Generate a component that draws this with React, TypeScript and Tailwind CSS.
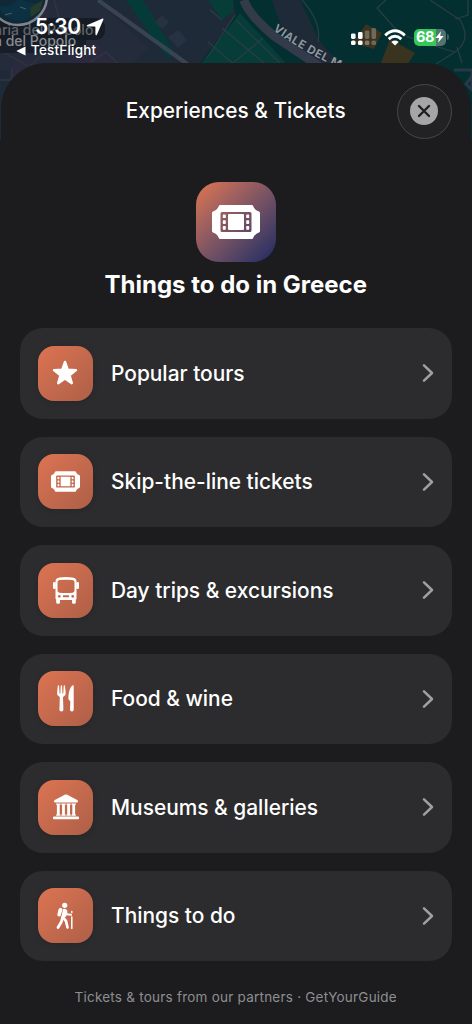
import type { ReactNode } from "react";

type Item = {
  label: string;
  icon: ReactNode;
};

function TicketIcon({ className }: { className?: string }) {
  return (
    <svg viewBox="0 0 48 34" className={className} fill="currentColor">
      <path
        fillRule="evenodd"
        d="M8.200 0H39.800Q40.800 0 41.200 1C42 3.500 44 5.400 46.600 6.300Q48 6.800 48 8V26Q48 27.200 46.600 27.700C44 28.600 42 30.500 41.200 33Q40.800 34 39.800 34H8.200Q7.200 34 6.800 33C6 30.500 4 28.600 1.400 27.700Q0 27.200 0 26V8Q0 6.800 1.400 6.300C4 5.400 6 3.500 6.800 1Q7.200 0 8.200 0ZM10 7Q8.500 7 8.500 8.500V25.500Q8.500 27 10 27H38Q39.500 27 39.500 25.500V8.500Q39.500 7 38 7Z"
      />
      <rect x="16" y="9" width="16" height="16" rx="1" />
      <rect x="10.800" y="9.400" width="3" height="3.700" rx=".7" />
      <rect x="10.800" y="15.200" width="3" height="3.700" rx=".7" />
      <rect x="10.800" y="21" width="3" height="3.700" rx=".7" />
      <rect x="34.200" y="9.400" width="3" height="3.700" rx=".7" />
      <rect x="34.200" y="15.200" width="3" height="3.700" rx=".7" />
      <rect x="34.200" y="21" width="3" height="3.700" rx=".7" />
    </svg>
  );
}

function StarIcon() {
  return (
    <svg viewBox="0 0 26 26" className="mr-px size-[26px]" fill="currentColor">
      <path
        d="M13 2L15.800 9.800L24 10.100L17.500 15.200L19.800 23.200L13 18.600L6.200 23.200L8.500 15.200L2 10.100L10.200 9.800Z"
        stroke="currentColor"
        strokeWidth="2.400"
        strokeLinejoin="round"
      />
    </svg>
  );
}

function BusIcon() {
  return (
    <svg viewBox="0 0 26 27" className="w-[26px] h-[27px]" fill="currentColor">
      <path
        fillRule="evenodd"
        d="M6.500 .6Q13 -.5 19.500 .6Q23.500 1.200 23.500 4.500V21.500Q23.500 22.300 22.800 22.600V25.500Q22.800 26.800 21.500 26.800H20.200Q19 26.800 19 25.500V23H7V25.500Q7 26.800 5.800 26.800H4.500Q3.200 26.800 3.200 25.500V22.600Q2.500 22.300 2.500 21.500V4.500Q2.500 1.200 6.500 .6ZM6.500 3Q4.500 3.300 4.500 5V13.500Q4.500 15.500 6.500 15.700Q13 16.400 19.500 15.700Q21.500 15.500 21.500 13.500V5Q21.500 3.300 19.500 3Q13 2.300 6.500 3ZM6.300 17.900A1.400 1.400 0 1 0 6.300 20.700A1.400 1.400 0 1 0 6.300 17.900ZM19.700 17.900A1.400 1.400 0 1 0 19.700 20.700A1.400 1.400 0 1 0 19.700 17.900ZM10.500 18.300Q9.800 18.300 9.800 19.300Q9.800 20.300 10.500 20.300H15.500Q16.200 20.300 16.200 19.300Q16.200 18.300 15.500 18.300Z"
      />
      <rect x="0" y="5" width="2.800" height="7" rx="1.200" />
      <rect x="23.200" y="5" width="2.800" height="7" rx="1.200" />
    </svg>
  );
}

function ForkKnifeIcon() {
  return (
    <svg viewBox="0 0 18 27" className="w-[18px] h-[27px]" fill="currentColor">
      <path d="M.8 1Q.9 .3 1.500 .3Q2.100 .3 2.100 1L2.500 8Q2.600 8.500 3 8.500Q3.400 8.500 3.400 8L3.700 1Q3.800 .3 4.400 .3Q5 .3 5.100 1L5.400 8Q5.400 8.500 5.800 8.500Q6.200 8.500 6.300 8L6.700 1Q6.700 .3 7.300 .3Q7.900 .3 8 1L8.700 8Q8.900 10.500 6.600 11.500Q6 11.900 6 12.700L6.400 24.800Q6.400 26.500 4.400 26.500Q2.400 26.500 2.400 24.800L2.800 12.700Q2.800 11.900 2.200 11.500Q-.1 10.500 .1 8Z" />
      <path d="M15.300 .5Q16.700 -.3 16.700 1.300V24.800Q16.700 26.500 14.900 26.500Q13 26.500 13 24.800L13.300 16.600Q13.300 16 12.800 15.700Q11.300 14.900 11.400 13C11.500 7.500 12.800 2.500 15.300 .5Z" />
    </svg>
  );
}

function MuseumIcon() {
  return (
    <svg viewBox="0 0 26 26" className="size-[26px]" fill="currentColor">
      <path d="M12.200 .6Q13 .2 13.800 .6L24.200 6Q25 6.500 25 7.500Q25 8.600 23.800 8.600H2.200Q1 8.600 1 7.500Q1 6.500 1.800 6Z" />
      <path d="M3.100 9.600H7.500V10.800H6.700V20.500H7.500V21.800H3.100V20.500H3.900V10.800H3.100ZM8.300 9.600H12.700V10.800H11.900V20.500H12.700V21.800H8.300V20.500H9.100V10.800H8.300ZM13.400 9.600H17.800V10.800H17V20.500H17.800V21.800H13.400V20.500H14.200V10.800H13.400ZM18.500 9.600H22.900V10.800H22.100V20.500H22.900V21.800H18.500V20.500H19.300V10.800H18.500Z" />
      <rect x="0" y="22.600" width="26" height="2.700" rx="1" />
    </svg>
  );
}

function HikerIcon() {
  return (
    <svg
      viewBox="0 0 18 28"
      className="mr-[2px] w-[18px] h-7"
      fill="none"
      stroke="currentColor"
      strokeLinecap="round"
      strokeLinejoin="round"
    >
      <circle cx="8.700" cy="3.300" r="2.600" fill="currentColor" stroke="none" />
      <path
        d="M4.300 5.900Q5 5.600 5.600 6.200L6.600 7.200L4.600 13.800Q4.300 14.700 3.400 14.400L1.900 13.900Q1.100 13.600 1.300 12.700L2.400 7.700Q2.800 6.200 4.300 5.900Z"
        fill="currentColor"
        stroke="none"
      />
      <path
        d="M8.200 8L6.600 15L9.300 13.300L10 9Z"
        fill="currentColor"
        strokeWidth="2.600"
      />
      <path d="M9.500 8.800L11 12.300L15 12.800" strokeWidth="2" />
      <path d="M6.500 15.500L5.300 20L2 25.500" strokeWidth="2.800" />
      <path d="M7 15.500L10 19L11.500 25.500" strokeWidth="2.700" />
      <path d="M15.800 9.600V10.400M15.800 15V26.500" strokeWidth="1.500" />
    </svg>
  );
}

const items: Item[] = [
  { label: "Popular tours", icon: <StarIcon /> },
  {
    label: "Skip-the-line tickets",
    icon: <TicketIcon className="w-[29px] h-[21px]" />,
  },
  { label: "Day trips & excursions", icon: <BusIcon /> },
  { label: "Food & wine", icon: <ForkKnifeIcon /> },
  { label: "Museums & galleries", icon: <MuseumIcon /> },
  { label: "Things to do", icon: <HikerIcon /> },
];

function MapBackground() {
  return (
    <svg
      viewBox="0 0 472 140"
      className="absolute left-0 top-0 w-[472px] h-[140px]"
      fill="none"
    >
      <rect width="472" height="140" fill="#1f2a39" />
      <path d="M34 0H95L150 48L125 70H0V40Z" fill="#242b3b" />
      <path d="M38 0H48L50 20L40 22ZM66 50L96 42L125 66H70ZM15 60H40L10 90V70Z" fill="#2a293e" />
      <path d="M126 0H143L175 54L167 58Z" fill="#043b38" />
      <path d="M233 0H472V140H410L330 70H195L236 15Z" fill="#032f30" />
      <path d="M208 0H233V12L222 20ZM240 13L285 62L275 70H196Z" fill="#063d38" />
      <path d="M272 0H300Q308 17 316 34T350 70H325Q285 48 272 0Z" fill="#1f2a39" />
      <path d="M155 22L162 15L169 22L162 29ZM168 37L178 30L187 40L178 48Z" fill="#263141" />
      <g stroke="#2b3341" strokeWidth="2">
        <path d="M98 0L190 66" stroke="#3a4352" strokeWidth="4" />
        <path d="M54 0L64 35L30 66M0 80H20M12 68V130M90 62L106 52L118 64" />
        <path d="M0 50L28 66M66 34L55 20L40 28M63 30L82 56" />
      </g>
      <g stroke="#2a3c46" strokeWidth="1.300">
        <path d="M210 10L222 20M235 15L207 58M208 42L236 66M222 28L264 63M236 20L280 63M263 38L233 63M302 0Q322 22 318 42M386 0L377 8L400 34L438 47L455 52Q472 40 460 20L430 0M455 52L436 64M462 63L457 47M468 0V15L455 19" />
      </g>
      <path d="M244 0Q248 14 274 36L322 68" stroke="#333a49" strokeWidth="9" />
      <path d="M366 24L382 33L374 49L353 43Z" fill="#3b321f" />
      <path d="M390 39L415 53L405 68H379Z" fill="#3a3320" />
      <path d="M454 70H472V90L466 84L472 76" stroke="#29374a" strokeWidth="3" />
      <path id="road-label" d="M273 30Q298 49 340 69" />
      <text
        fill="#8d959e"
        stroke="#19232f"
        strokeWidth="1"
        paintOrder="stroke"
        className="font-['Inter'] text-[11.500px] font-bold tracking-[0.500px]"
      >
        <textPath href="#road-label">VIALE DEL M</textPath>
      </text>
      <rect x="-10" y="18" width="115" height="22" rx="9" fill="#151c25" />
      <rect x="-10" y="34" width="96" height="19" rx="7" fill="#151c25" fillOpacity=".8" />
      <text
        x="-6"
        y="35"
        fill="#60656b"
        className="font-['Inter'] text-[14px] font-medium"
      >
        aria del Popolo
      </text>
      <text
        x="-6"
        y="46"
        fill="#878a8f"
        className="font-['Inter'] text-[14px] font-medium"
      >
        a del Popolo
      </text>
      <circle cx="18" cy="-4" r="29" fill="#102838" stroke="#7f858b" strokeWidth="2.500" />
      <path d="M-2 6Q15 8 18 -3Q36 9 43 -2Q38 18 22 21Q4 21 -2 6Z" fill="#0c3143" />
      <path d="M30 8L43 0L40 11L31 17Z" fill="#283a2b" />
      <path d="M5 15L12 13M20 7L26 9" stroke="#45606a" />
    </svg>
  );
}

function StatusBar() {
  return (
    <div className="relative flex h-[63px] justify-between text-white">
      <div className="flex flex-col pl-[35px] pt-[15px]">
        <div className="flex h-6 items-center">
          <span className="w-[46px] text-[21px] font-semibold leading-6 tracking-[-0.300px] whitespace-nowrap">
            5:30
          </span>
          <svg viewBox="0 0 18 18" className="ml-[5px] size-[18px]" fill="currentColor">
            <path d="M16 .8Q18 0 17.200 2L11 16.600Q10 18.300 9.400 16.300V9.100Q9.400 8.600 8.900 8.600H1.700Q-.3 8 1.400 7Z" />
          </svg>
        </div>
        <div className="-ml-[19px] flex h-[23px] items-center gap-[5px]">
          <svg viewBox="0 0 10 10" className="size-[10px]" fill="currentColor">
            <path d="M.3 5L9.500 .5V9.500Z" />
          </svg>
          <span className="text-[13.500px] font-medium tracking-[0.200px]">
            TestFlight
          </span>
        </div>
      </div>
      <div className="flex h-[26px] items-center pr-[23.500px] mt-6">
        <svg viewBox="0 0 26 18" className="w-[26px] h-[18px]" fill="currentColor">
          <rect x="0" y="5.500" width="4.600" height="5.500" rx="1.400" />
          <rect x="7" y="4" width="4.600" height="7" rx="1.400" />
          <rect x="13.800" y="2.500" width="4.600" height="8.500" rx="1.400" fillOpacity=".27" />
          <rect x="20.500" y="0" width="4.600" height="11" rx="1.400" fillOpacity=".27" />
          <rect x="0" y="12.500" width="4.600" height="4.600" rx="1.600" />
          <rect x="7" y="12.500" width="4.600" height="4.600" rx="1.600" />
          <rect x="13.800" y="12.500" width="4.600" height="4.600" rx="1.600" fillOpacity=".35" />
          <rect x="20.500" y="12.500" width="4.600" height="4.600" rx="1.600" fillOpacity=".27" />
        </svg>
        <svg viewBox="0 0 22 17" className="ml-[7px] w-[22px] h-[17px]" fill="none" stroke="currentColor">
          <path d="M1.200 6.300Q11 -2.700 20.800 6.300" strokeWidth="3" />
          <path d="M4.700 10.100Q11 4.500 17.300 10.100" strokeWidth="3" />
          <path d="M7.300 13Q11 10.100 14.700 13L11 16.600Z" fill="currentColor" stroke="none" />
        </svg>
        <div className="ml-[7.500px] flex h-[17px] w-8 items-center rounded-[5px] bg-linear-to-r from-[#34c759] from-68% to-[#53736f] to-68% pl-[2.500px]">
          <span className="text-[14.500px] font-bold leading-none tracking-[-0.300px]">68</span>
          <svg viewBox="0 0 9 12" className="ml-[1px] w-[9px] h-3" fill="currentColor">
            <path d="M6 .3L.5 6.900H4L3 11.700L8.700 4.900H5.200Z" />
          </svg>
        </div>
        <div className="ml-px h-[6px] w-[2px] rounded-r-full bg-[#405e5d]" />
      </div>
    </div>
  );
}

function Row({ label, icon }: Item) {
  return (
    <button className="flex h-[90.500px] w-full items-center rounded-[23px] bg-[#2c2c2e] pl-[18px] pr-[18px] text-left">
      <span className="flex size-[55px] items-center justify-center rounded-[16px] bg-linear-to-br from-[#dc7452] to-[#ae5f48] text-white shadow-[0_1px_5px_rgba(0,0,0,0.15)]">
        {icon}
      </span>
      <span className="ml-[18px] flex-1 text-[20.900px] font-medium text-white whitespace-nowrap">
        {label}
      </span>
      <svg
        viewBox="0 0 12 20"
        className="w-3 h-5"
        fill="none"
        stroke="#a0a0a3"
        strokeWidth="2.500"
        strokeLinecap="round"
        strokeLinejoin="round"
      >
        <path d="M2 2.300L10 10L2 17.700" />
      </svg>
    </button>
  );
}

export default function App() {
  return (
    <div className="relative h-[1024px] w-[472px] overflow-hidden bg-[#1c1c1e] font-['Inter',sans-serif]">
      <MapBackground />
      <StatusBar />
      <main className="relative mx-px flex h-[961px] flex-col rounded-t-[46px] bg-[#1c1c1e] pl-[19px] pr-[19.500px] pt-5">
        <header className="grid h-14 grid-cols-[55px_1fr_55px] items-center">
          <h1 className="col-start-2 text-center text-[20.800px] font-medium text-white whitespace-nowrap">
            Experiences & Tickets
          </h1>
          <button
            aria-label="Close"
            className="flex size-[55px] items-center justify-center rounded-full border border-[#48484a] bg-[#222224]"
          >
            <svg viewBox="0 0 28 28" className="size-7">
              <circle cx="14" cy="14" r="14" fill="#a5a5a7" />
              <path
                d="M9 9L19 19M19 9L9 19"
                stroke="#202022"
                strokeWidth="2.400"
                strokeLinecap="round"
              />
            </svg>
          </button>
        </header>
        <section className="mt-[43px] flex flex-col items-center">
          <div className="flex size-20 items-center justify-center rounded-[23px] bg-linear-to-br from-[#d87252] from-5% to-[#282e63] to-95% text-white">
            <TicketIcon className="w-12 h-[34px]" />
          </div>
          <h2 className="mt-[7px] text-[24px] font-bold leading-8 text-white whitespace-nowrap">
            Things to do in Greece
          </h2>
        </section>
        <div className="mt-[27px] flex flex-col gap-[18px]">
          {items.map((item) => (
            <Row key={item.label} {...item} />
          ))}
        </div>
        <p className="mt-[26px] text-center text-[13.500px] leading-5 tracking-[0.230px] text-[#8e8e93] whitespace-nowrap">
          Tickets & tours from our partners · GetYourGuide
        </p>
      </main>
    </div>
  );
}
